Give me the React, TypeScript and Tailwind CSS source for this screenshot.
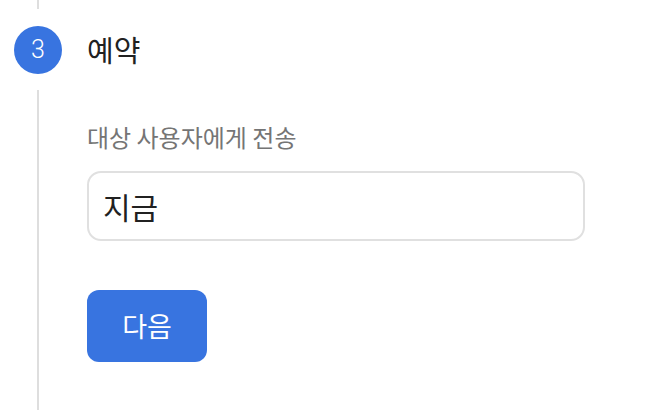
export default function App() {
  return (
    <div
      className="w-[662px] h-[410px] bg-white flex overflow-hidden"
      style={{ fontFamily: '"Noto Sans CJK KR", "Noto Sans", sans-serif' }}
    >
      {/* step rail */}
      <div className="w-[76px] flex flex-col items-center shrink-0">
        <div className="h-[9px] w-[2px] bg-[#dedede]" />
        <div
          className="mt-[17px] w-[48px] h-[48px] rounded-full bg-[#3874e0] text-white flex items-center justify-center text-[25px] font-light"
          style={{ fontFamily: "Roboto, sans-serif" }}
        >
          3
        </div>
        <div className="mt-[16px] flex-1 w-[2px] bg-[#dedede]" />
      </div>

      <div className="flex-1 pl-[11px]">
        <div className="mt-[26px] h-[48px] flex items-center text-[29px] text-[#212121]">
          예약
        </div>
        <div className="mt-[47px] text-[24px] leading-[32px] text-[#757575]">
          대상 사용자에게 전송
        </div>
        <div className="mt-[18px] w-[498px] h-[70px] rounded-[14px] border-2 border-[#e0e0e0] flex items-center px-[14px] text-[30px] text-[#212121]">
          지금
        </div>
        <button className="mt-[49px] w-[120px] h-[72px] rounded-[12px] bg-[#3874e0] text-white text-[27px] flex items-center justify-center">
          다음
        </button>
      </div>
    </div>
  );
}
